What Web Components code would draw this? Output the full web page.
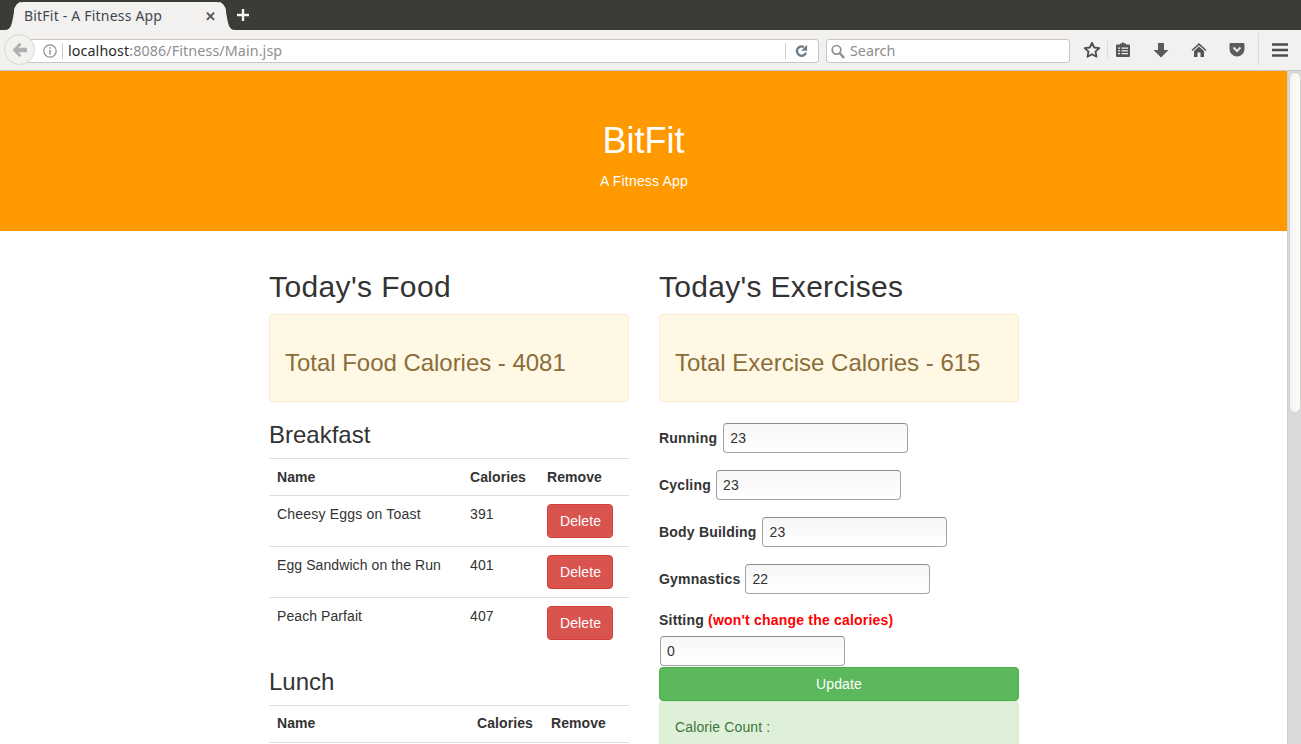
<!DOCTYPE html>
<html><head><meta charset="utf-8">
<style>
html,body{margin:0;padding:0;height:744px;overflow:hidden;background:#fff}
body{font-family:"Liberation Sans",Arial,sans-serif;font-size:14px;line-height:20px;color:#333}
</style></head><body>
<browser-chrome></browser-chrome>
<page-view>
  <hero-band></hero-band>
  <page-main>
    <food-col slot="left"></food-col>
    <exercise-col slot="right"></exercise-col>
  </page-main>
</page-view>
<script>
function def(name,html,init){
  customElements.define(name,class extends HTMLElement{
    constructor(){super();this.attachShadow({mode:'open'}).innerHTML=html;}
    connectedCallback(){if(init)init(this)}
  });
}
def('browser-chrome',`<style>
:host{display:block;height:71px;background:#f2f1ef;font-family:"Noto Sans","Open Sans",sans-serif;position:relative}
.tabs{height:30px;background:#3c3b37;display:flex;align-items:flex-end;position:relative}
.tab{position:relative;margin-left:14px;width:212px;height:28px;display:flex;align-items:center;justify-content:space-between;box-sizing:border-box;padding:0 10px;font-size:14px;letter-spacing:.2px;color:#3f4752;background:#f2f1ef;border-radius:9px 9px 0 0}
.tab:before,.tab:after{content:"";position:absolute;bottom:0;width:16px;height:28px;background:#f2f1ef}
.tab:before{left:-9px;clip-path:path("M0 28C7 28 7 20 9 10C10 4 13 0 16 0V28Z")}
.tab:after{right:-9px;clip-path:path("M16 28C9 28 9 20 7 10C6 4 3 0 0 0V28Z")}
.x{color:#55534f;font-size:13px;font-weight:700;position:relative;z-index:1;line-height:1;letter-spacing:0}
.plus{margin-left:10px;align-self:center;display:flex}
.bar{height:40px;display:flex;align-items:center;position:relative;border-bottom:1px solid #c9c7c3}
.url{position:absolute;left:16px;top:9px;width:801px;height:22px;background:#fff;border:1px solid #c8c4bf;border-radius:0 3px 3px 0;display:flex;align-items:center;font-size:14.3px}
.back{position:absolute;left:4px;top:4px;width:31px;height:31px;box-sizing:border-box;background:#f3f2f0;border:1px solid #d9d7d3;border-radius:50%;display:flex;align-items:center;justify-content:center;z-index:1}
.i{position:absolute;left:25px;top:2px}
.sep{position:absolute;top:3px;width:1px;height:16px;background:#cfccc8}
.host{position:absolute;left:51px;color:#2b2b2b;white-space:nowrap;letter-spacing:.1px}.host span{color:#8f8f8f}
.reload{position:absolute;left:778px;top:4px}
.search{position:absolute;left:826px;top:9px;width:242px;height:22px;background:#fff;border:1px solid #c8c4bf;border-radius:3px;display:flex;align-items:center;color:#8c8c8c;font-size:14.3px}
.search svg{margin:0 5px 0 4px}
.ic{position:absolute}
.v{position:absolute;top:3px;width:1px;height:33px;background:#dedcd8}
</style>
<div class="tabs"><div class="tab"><span>BitFit - A Fitness App</span><span class="x">✕</span></div>
<span class="plus"><svg width="14" height="14" viewBox="0 0 14 14"><path d="M7 1v12M1 7h12" stroke="#f4f4f4" stroke-width="2.4"/></svg></span></div>
<div class="bar">
 <div class="url">
  <svg class="i" width="18" height="18" viewBox="0 0 18 18"><circle cx="8" cy="9" r="6.200" fill="none" stroke="#8e8e8e" stroke-width="1.200"/><path d="M8 8v4.500M8 5.200v1.500" stroke="#8e8e8e" stroke-width="1.500"/></svg>
  <div class="sep" style="left:45px"></div>
  <span class="host">localhost<span>:8086/Fitness/Main.jsp</span></span>
  <div class="sep" style="left:768px"></div>
  <svg class="reload" width="13" height="14" viewBox="0 0 14 15"><path d="M11.800 9.200A5 5 0 1 1 9.600 3.200" fill="none" stroke="#6d7b87" stroke-width="2.600"/><path d="M13 .8v6.400H6.600z" fill="#6d7b87"/></svg>
 </div>
 <div class="back"><svg width="18" height="16" viewBox="0 0 18 16"><path d="M8.500 .8L1.500 8l7 7.200 2-2L7.500 10.200H16V5.800H7.500l3-3z" fill="#b0b0ae"/></svg></div>
 <div class="search"><svg width="14" height="15" viewBox="0 0 14 15"><circle cx="5.500" cy="5.800" r="4.300" fill="none" stroke="#8e8e8e" stroke-width="1.700"/><path d="M8.800 9.200L13 14" stroke="#8e8e8e" stroke-width="2.400"/></svg><span>Search</span></div>
 <svg class="ic" style="left:1083px;top:11px" width="18" height="18" viewBox="0 0 18 18"><path d="M9 1.800l2.200 4.700 5.100.6-3.800 3.500 1 5.100L9 13.200l-4.500 2.500 1-5.100L1.700 7.100l5.100-.6z" fill="none" stroke="#4d4d4d" stroke-width="1.800" stroke-linejoin="round"/></svg>
 <div class="v" style="left:1107px;top:11px;height:18px"></div>
 <svg class="ic" style="left:1115px;top:11px" width="16" height="18" viewBox="0 0 16 18"><path d="M1 4.500a1 1 0 0 1 1-1H5V2.500h2V1.500h2v1h2v1h3a1 1 0 0 1 1 1V15a1 1 0 0 1-1 1H2a1 1 0 0 1-1-1z" fill="#555"/><path d="M3 7.200h2M3 9.900h2M3 12.600h2M6.500 7.200H13M6.500 9.900H13M6.500 12.600H13" stroke="#f2f1ef" stroke-width="1.300"/></svg>
 <svg class="ic" style="left:1153px;top:11px" width="16" height="18" viewBox="0 0 16 18"><path d="M5 2h6v7h4.500L8 16.500.5 9H5z" fill="#5a5a5a"/></svg>
 <svg class="ic" style="left:1191px;top:11px" width="16" height="18" viewBox="0 0 16 18"><path d="M8 2L.5 9l1 1.100L8 4.200l6.500 5.900 1-1.100z" fill="#555"/><path d="M8 5.500l-5 4.500v6h3.500v-4.500h3V16H13v-6z" fill="#555"/></svg>
 <svg class="ic" style="left:1229px;top:12px" width="16" height="16" viewBox="0 0 16 16"><path d="M1.700 1h12.600a1.200 1.200 0 0 1 1.200 1.200V7A7.500 7.500 0 0 1 .5 7V2.200A1.200 1.200 0 0 1 1.700 1z" fill="#5c5c5c"/><path d="M4.500 5.500L8 9l3.500-3.500" fill="none" stroke="#e8e7e5" stroke-width="2"/></svg>
 <div class="v" style="left:1258px"></div>
 <svg class="ic" style="left:1272px;top:12px" width="16" height="16" viewBox="0 0 16 16"><path d="M0 2.500h16M0 8h16M0 13.500h16" stroke="#4d4d4d" stroke-width="2.300"/></svg>
</div>`);
def('page-view',`<style>
:host{display:block;position:relative;height:673px;overflow:hidden;padding-right:14px;box-sizing:border-box}
.track{position:absolute;right:0;top:0;width:14px;height:100%;background:#d9d9d9;border-left:1px solid #cfcfcf;box-sizing:border-box}
.thumb{position:absolute;left:1px;top:1px;width:12px;height:341px;background:linear-gradient(90deg,#f6f5f3,#fbfaf9);border:1px solid #d3d1cd;box-sizing:border-box;border-radius:7px}
</style><slot></slot><div class="track"><div class="thumb"></div></div>`);
def('hero-band',`<style>
:host{display:block;height:160px;background:#f90;color:#fff;text-align:center}
h1{margin:0;padding-top:50px;font-size:36px;font-weight:400;line-height:39.6px}
p{margin:10px 0 0;padding-left:1px;font-size:14px;line-height:20px;letter-spacing:.2px}
</style><h1>BitFit</h1><p>A Fitness App</p>`);
def('page-main',`<style>
:host{display:flex;gap:30px;padding:20px 0 0 269px}
::slotted(*){display:block;width:360px;flex:none}
</style><slot name="left"></slot><slot name="right"></slot>`);
const panelCss=`h2{margin:19px 0 11px;font-size:30px;line-height:33px;font-weight:400;color:#333;letter-spacing:.3px}
.well{height:88px;box-sizing:border-box;margin-bottom:20px;padding:10px 15px 0;background:#fef8e4;border:1px solid #faebcc;border-radius:4px;color:#8a6d3b;font-size:24px;display:flex;align-items:center;line-height:26.4px}`;
def('food-col',`<style>:host{display:block}${panelCss}</style>
<h2 style="letter-spacing:.38px">Today's Food</h2><div class="well" style="letter-spacing:-.03px">Total Food Calories - 4081</div>
<meal-table title="Breakfast" cols="193,77" rows="Cheesy Eggs on Toast|391|.2;Egg Sandwich on the Run|401|.09;Peach Parfait|407|.08"></meal-table>
<meal-table tight title="Lunch" cols="200,74" rows=""></meal-table>`);
def('meal-table',`<style>
:host{display:block;margin-bottom:20px}
h3{margin:20px 0 10px;font-size:24px;font-weight:400;line-height:26.4px;color:#333}
:host([tight]) h3{margin-bottom:9px}
:host([tight]) .h>div{padding-top:7px}
.r{display:grid;border-top:1px solid #ddd}
.r>div{padding:8px}
.h{font-weight:700;height:37px;box-sizing:border-box;letter-spacing:.08px}
.c{height:51px;box-sizing:border-box}
.n{letter-spacing:.1px}
.b{display:inline-block;box-sizing:border-box;width:66px;height:34px;padding:6px 0 6px 12px;background:#d9534f;border:1px solid #d43f3a;border-radius:4px;color:#fff;line-height:20px;letter-spacing:.1px}
.end{height:0;border-top-color:transparent}
</style><h3 id="t"></h3><div id="b"></div>`,el=>{
  const s=el.shadowRoot,[a,b]=el.getAttribute('cols').split(',').map(Number);
  s.getElementById('t').textContent=el.getAttribute('title');
  const g=`grid-template-columns:${a}px ${b}px 1fr`;
  const rows=(el.getAttribute('rows')||'').split(';').filter(Boolean);
  let h=`<div class="r h" style="${g}"><div>Name</div><div>Calories</div><div>Remove</div></div>`;
  rows.forEach(x=>{const[n,c,l]=x.split('|');
    h+=`<div class="r c" style="${g}"><div style="letter-spacing:${l}px">${n}</div><div class="n">${c}</div><div><span class="b">Delete</span></div></div>`});
  if(rows.length)h+=`<div class="r end"></div>`;else h+=`<div class="r" style="height:0"></div>`;
  s.getElementById('b').innerHTML=h;
});
def('exercise-col',`<style>:host{display:block}${panelCss}
.well{margin-bottom:21px}
</style>
<h2>Today's Exercises</h2><div class="well">Total Exercise Calories - 615</div>
<form-row label="Running" value="23" gap="6"></form-row>
<form-row label="Cycling" value="23" gap="5"></form-row>
<form-row label="Body Building" value="23" gap="6"></form-row>
<form-row label="Gymnastics" value="22" gap="5"></form-row>
<form-stack></form-stack>
<action-btn>Update</action-btn>
<count-box>Calorie Count :</count-box>`);
const inputCss=`input{box-sizing:border-box;width:185px;height:30px;padding:0 6px;font:14px "Liberation Sans",Arial,sans-serif;letter-spacing:.2px;color:#333;border:1px solid #a3a3a3;border-top-color:#8e8e8e;border-radius:4px;background:linear-gradient(#f7f7f7,#fff);outline:0;margin:0}`;
def('form-row',`<style>:host{display:flex;align-items:center;height:30px;margin-bottom:17px}
b{font-weight:700;letter-spacing:.2px}${inputCss}</style><b></b><input>`,el=>{
  const r=el.shadowRoot;
  r.querySelector('b').textContent=el.getAttribute('label');
  r.querySelector('input').setAttribute('value',el.getAttribute('value'));
  el.style.gap=el.getAttribute('gap')+'px';
});
def('form-stack',`<style>:host{display:block}
div{font-weight:700;line-height:20px;height:20px;margin:-1px 0 6px;letter-spacing:.2px}span{color:red}
${inputCss} input{margin-left:1px;display:block}</style><div>Sitting <span>(won't change the calories)</span></div><input value="0">`);
def('action-btn',`<style>:host{display:block;box-sizing:border-box;height:34px;margin-top:1px;background:#5cb85c;border:1px solid #4cae4c;border-radius:4px;color:#fff;text-align:center;line-height:32px;letter-spacing:.15px}</style><slot></slot>`);
def('count-box',`<style>:host{display:block;box-sizing:border-box;height:120px;padding:15px;background:#dff0d8;border:1px solid #d6e9c6;border-radius:4px;color:#3c763d;letter-spacing:.13px}</style><slot></slot>`);
</script></body></html>
